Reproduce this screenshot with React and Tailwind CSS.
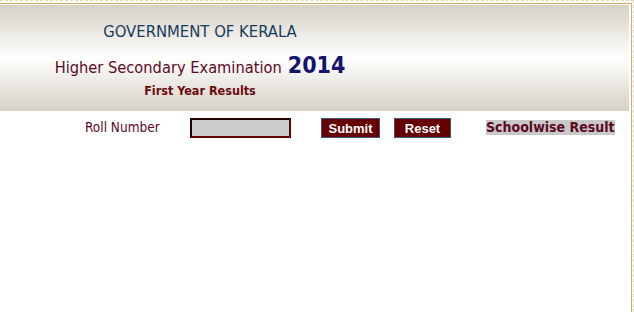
import React from 'react';

function App() {
  return (
    <div className="w-[634px] h-[312px] bg-white overflow-hidden">
      <div className="h-full border-t border-r border-dashed border-[#ecd6b2] pt-[2px] pr-px">
        <div className="h-full border-t border-r border-[#e0a868] pt-px pr-[2px]">
          <div className="h-[106px] w-full bg-gradient-to-b from-[#d6d1c4] via-[#ffffff] to-[#d6d1c4] flex">
            <div className="w-[400px] flex flex-col items-center pt-[15px] font-['DejaVu_Sans',sans-serif] font-stretch-condensed">
              <div className="text-[16.5px] leading-[24px] text-[#173d5c]">GOVERNMENT OF KERALA</div>
              <div className="flex items-baseline mt-[7px] leading-[29px]">
                <span className="text-[16.3px] text-[#5c0a1e]">Higher Secondary Examination</span>
                <span className="text-[23px] font-bold text-[#14146e] ml-[6px]">2014</span>
              </div>
              <div className="text-[12.5px] leading-[18px] font-bold text-[#6b0a10]">First Year Results</div>
            </div>
          </div>
          <div className="flex items-center h-[30px] pt-[3px] font-['DejaVu_Sans',sans-serif] font-stretch-condensed whitespace-nowrap">
            <span className="ml-[85px] w-[105px] text-[13.5px] text-[#5c0a1e]">Roll Number</span>
            <input
              type="text"
              className="w-[101px] h-[20px] bg-[#cccccc] border-2 border-t-[#200000] border-l-[#200000] border-b-[#660000] border-r-[#660000] outline-none"
            />
            <button className="ml-[30px] w-[59px] h-[20px] bg-[#660000] border border-[#3c5a78] text-white text-[13px] font-bold font-['Liberation_Sans',sans-serif]">
              Submit
            </button>
            <button className="ml-[14px] w-[57px] h-[20px] bg-[#660000] border border-[#3c5a78] text-white text-[13px] font-bold font-['Liberation_Sans',sans-serif]">
              Reset
            </button>
            <span className="ml-[35px] bg-[#c8c8c8] text-[14px] leading-[15px] font-bold text-[#5c0a1e]">
              Schoolwise Result
            </span>
          </div>
        </div>
      </div>
    </div>
  );
}

export default App;
